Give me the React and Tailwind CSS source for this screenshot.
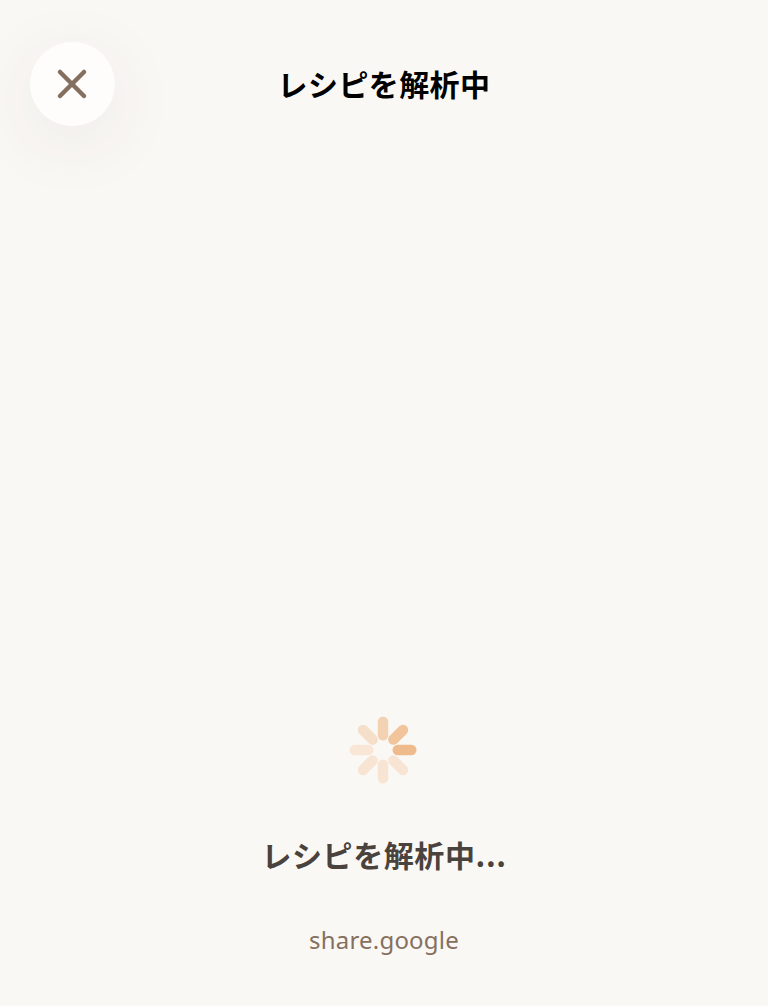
const JP_FONT = { fontFamily: '"Noto Sans CJK JP", "Noto Sans", sans-serif' };

// spoke colours clockwise from the right, strongest first
const SPOKES = [
    { angle: 0, color: '#efba8c' },
    { angle: 45, color: '#f8e4d3' },
    { angle: 90, color: '#f8e4d3' },
    { angle: 135, color: '#f8e4d3' },
    { angle: 180, color: '#f9e6d6' },
    { angle: 225, color: '#f6dfc9' },
    { angle: 270, color: '#f3d2b3' },
    { angle: 315, color: '#f1c49c' },
];

const Spinner = () => (
    <svg width="68" height="68" viewBox="-34 -34 68 68" className="mr-[3px]">
        {SPOKES.map((s) => (
            <rect key={s.angle} x="9.5" y="-5.25" width="24" height="10.5" rx="5.25" fill={s.color} transform={`rotate(${s.angle})`} />
        ))}
    </svg>
);

export default function App() {
    return (
        <div className="relative flex flex-col w-full h-[1006px] overflow-hidden bg-[#faf8f5]" style={JP_FONT}>
            {/* Header */}
            <header className="relative flex items-center justify-center h-[84px] mt-[42px]">
                <button className="absolute left-[30px] top-0 flex items-center justify-center w-[85px] h-[84px] rounded-full bg-[#fefdfc] shadow-[0_16px_72px_rgba(60,50,40,0.08)]">
                    <svg width="36" height="36" viewBox="0 0 36 36" fill="none" stroke="#85705f" strokeWidth="4.5" strokeLinecap="round" className="-ml-[1px]">
                        <path d="M6 6 L30 30 M30 6 L6 30" />
                    </svg>
                </button>
                <h1 className="text-[30px] leading-none font-bold tracking-[0.4px] text-black -mt-[2px]">レシピを解析中</h1>
            </header>

            {/* Loading status */}
            <main className="flex flex-col flex-1 items-center justify-end pb-[48px]">
                <Spinner />
                <p className="mt-[48px] text-[30px] leading-[44px] font-bold tracking-[0.6px] text-[#4a423c]">レシピを解析中...</p>
                <p className="mt-[46px] text-[24px] leading-[36px] tracking-[0.2px] text-[#85705f]" style={{ fontFamily: '"Noto Sans", sans-serif' }}>share.google</p>
            </main>
        </div>
    );
}
